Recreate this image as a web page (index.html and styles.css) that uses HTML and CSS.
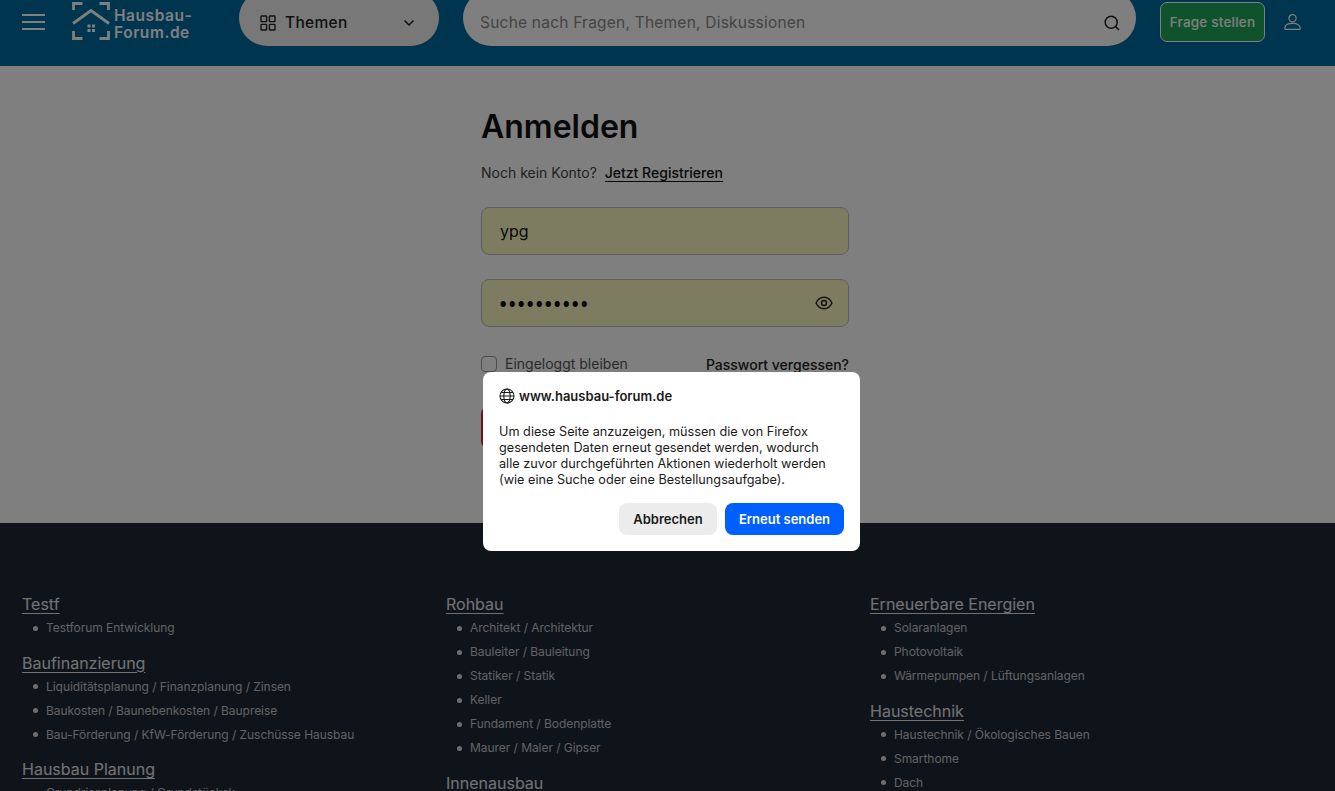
FILE: index.html
```html
<!DOCTYPE html>
<html lang="de">
<head>
<meta charset="utf-8">
<title>Anmelden</title>
<link rel="stylesheet" href="styles.css">
</head>
<body>
<header class="topbar">
  <button class="burger" aria-label="Menü"><span></span><span></span><span></span></button>
  <a class="logo">
    <svg class="logo-mark" width="38" height="38" viewBox="0 0 38 38" fill="none" stroke="currentColor" stroke-width="2.8">
      <path d="M1.500 8V1.500H10.500M27.500 1.500H36.500V8M1.500 29V36.500H10.500M27.500 36.500H36.500V29"/>
      <path d="M1 21.500L19 8.500L37 21.500"/>
      <path d="M15.500 22.500h3v3h-3zM20 22.500h3v3h-3zM15.500 27h3v3h-3zM20 27h3v3h-3z" fill="currentColor" stroke="none"/>
    </svg>
    <span class="logo-text">Hausbau -<br>Forum.de</span>
  </a>
  <button class="themes">
    <svg width="16" height="16" viewBox="0 0 16 16" fill="none" stroke="currentColor" stroke-width="1.4"><rect x="1" y="1" width="5.6" height="5.6" rx=".6"/><rect x="9.4" y="1" width="5.6" height="5.6" rx=".6"/><rect x="1" y="9.4" width="5.6" height="5.6" rx=".6"/><rect x="9.4" y="9.4" width="5.6" height="5.6" rx=".6"/></svg>
    <span class="themes-label">Themen</span>
    <svg class="chev" width="12" height="8" viewBox="0 0 12 8" fill="none" stroke="currentColor" stroke-width="1.5"><path d="M1.500 1.500L6 6L10.500 1.500"/></svg>
  </button>
  <div class="search">
    <span class="search-ph">Suche nach Fragen, Themen, Diskussionen</span>
    <svg width="18" height="18" viewBox="0 0 18 18" fill="none" stroke="currentColor" stroke-width="1.5"><circle cx="8.200" cy="8.200" r="6"/><path d="M12.600 12.600L16 16"/></svg>
  </div>
  <button class="ask">Frage stellen</button>
  <svg class="user" width="17" height="16" viewBox="0 0 17 16" fill="none" stroke="currentColor" stroke-width="1.200"><circle cx="8.500" cy="4.300" r="3.600"/><path d="M.8 14.400c0-3 3-5 7.700-5s7.700 2 7.700 5c0 .6-.3.900-.9.900H1.700c-.6 0-.9-.3-.9-.9z"/></svg>
</header>

<main class="content">
  <form class="login">
    <h1>Anmelden</h1>
    <p class="signup"><span>Noch kein Konto?</span> <a>Jetzt Registrieren</a></p>
    <div class="field">ypg</div>
    <div class="field field-pass">
      <span class="dots">●●●●●●●●●●</span>
      <svg width="18" height="14" viewBox="0 0 18 14" fill="none" stroke="currentColor" stroke-width="1.400"><path d="M1 7C3 3 5.800 1.200 9 1.200S15 3 17 7c-2 4-4.800 5.800-8 5.800S3 11 1 7z"/><circle cx="9" cy="7" r="2.500"/></svg>
    </div>
    <div class="options">
      <label class="remember"><span class="check"></span>Eingeloggt bleiben</label>
      <a class="forgot">Passwort vergessen?</a>
    </div>
    <button class="submit" type="button">Anmelden</button>
  </form>
</main>

<footer class="footer">
  <div class="col">
    <h3>Testf</h3>
    <ul><li>Testforum Entwicklung</li></ul>
    <h3>Baufinanzierung</h3>
    <ul><li>Liquiditätsplanung / Finanzplanung / Zinsen</li><li>Baukosten / Baunebenkosten / Baupreise</li><li>Bau-Förderung / KfW-Förderung / Zuschüsse Hausbau</li></ul>
    <h3>Hausbau Planung</h3>
    <ul><li>Grundrissplanung / Grundstücksk</li></ul>
  </div>
  <div class="col">
    <h3>Rohbau</h3>
    <ul><li>Architekt / Architektur</li><li>Bauleiter / Bauleitung</li><li>Statiker / Statik</li><li>Keller</li><li>Fundament / Bodenplatte</li><li>Maurer / Maler / Gipser</li></ul>
    <h3>Innenausbau</h3>
  </div>
  <div class="col">
    <h3>Erneuerbare Energien</h3>
    <ul><li>Solaranlagen</li><li>Photovoltaik</li><li>Wärmepumpen / Lüftungsanlagen</li></ul>
    <h3>Haustechnik</h3>
    <ul><li>Haustechnik / Ökologisches Bauen</li><li>Smarthome</li><li>Dach</li></ul>
  </div>
</footer>

<div class="scrim"></div>
<div class="dialog" role="dialog">
  <div class="dialog-host">
    <svg width="16" height="16" viewBox="0 0 16 16" fill="none" stroke="currentColor" stroke-width="1.100"><circle cx="8" cy="8" r="7"/><ellipse cx="8" cy="8" rx="3.200" ry="7"/><path d="M1 8h14M2 4.500h12M2 11.500h12"/></svg>
    <span>www.hausbau-forum.de</span>
  </div>
  <p class="dialog-text">Um diese Seite anzuzeigen, müssen die von Firefox gesendeten Daten erneut gesendet werden, wodurch alle zuvor durchgeführten Aktionen wiederholt werden (wie eine Suche oder eine Bestellungsaufgabe).</p>
  <div class="dialog-actions">
    <button class="btn btn-cancel">Abbrechen</button>
    <button class="btn btn-primary">Erneut senden</button>
  </div>
</div>
</body>
</html>
```
FILE: styles.css
```css
* { box-sizing: border-box; }
html, body { margin: 0; padding: 0; height: 791px; overflow: hidden; }
body { font-family: Inter, "Liberation Sans", sans-serif; background: #fff; color: #111; }
button { font-family: inherit; border: 0; padding: 0; }
p, h1, h3, ul { margin: 0; padding: 0; }

.topbar { height: 66px; background: #006a9f; display: flex; align-items: flex-end; padding: 0 34px 20px 22px; overflow: hidden; flex: none; }
.burger { width: 23px; background: none; display: flex; flex-direction: column; gap: 5px; margin-bottom: 16px; flex: none; }
.burger span { display: block; height: 2px; background: #fff; }
.logo { display: flex; align-items: center; gap: 4px; width: 118px; margin-left: 27px; color: #fff; margin-bottom: 5px; flex: none; }
.logo-mark { flex: none; }
.logo-text { font-weight: 600; font-size: 15.500px; line-height: 17px; letter-spacing: .55px; word-spacing: -4.500px; padding-top: 6px; white-space: nowrap; }
.themes { width: 200px; height: 56px; margin-left: 49px; border-radius: 28px; background: #f1f1f1; display: flex; align-items: center; padding: 9px 24px 0 21px; color: #222; flex: none; }
.themes-label { font-size: 15.500px; font-weight: 500; margin-left: 9px; flex: 1; text-align: left; letter-spacing: .3px; }
.search { flex: 1; height: 56px; margin-left: 24px; border-radius: 28px; background: #fff; display: flex; align-items: center; padding: 9px 15px 0 17px; color: #222; }
.search-ph { flex: 1; font-size: 15.500px; color: #888; letter-spacing: .22px; }
.ask { width: 105px; height: 40px; margin-left: 24px; margin-bottom: 4px; border-radius: 7px; background: #1fa65a; border: 1px solid #fff; color: #fff; font-size: 13.500px; font-weight: 500; letter-spacing: .2px; flex: none; }
.user { margin-left: 19px; margin-bottom: 16px; color: #fff; flex: none; }

.content { height: 457px; display: flex; justify-content: center; overflow: hidden; }
.login { width: 368px; margin-left: -5px; padding-top: 42px; }
h1 { font-size: 32px; font-weight: 600; line-height: 38px; }
.signup { font-size: 14px; line-height: 20px; margin-top: 17px; color: #444; }
.signup a { color: #111; font-weight: 500; border-bottom: 1.500px solid #111; margin-left: 4px; }
.field { height: 48px; margin-top: 24px; border-radius: 8px; background: #fbf9c0; border: 1px solid #bbb; padding: 0 18px; display: flex; align-items: center; font-size: 16px; color: #111; }
.field-pass { justify-content: space-between; padding-right: 15px; color: #222; }
.dots { font-size: 7px; letter-spacing: 2.600px; color: #000; padding-top: 2px; }
.options { display: flex; justify-content: space-between; align-items: center; margin-top: 28px; font-size: 14px; }
.remember { display: flex; align-items: center; gap: 8px; color: #555; }
.check { width: 16px; height: 16px; border: 1px solid #999; border-radius: 4px; background: #fff; }
.forgot { color: #222; font-weight: 500; position: relative; top: 1px; }
.submit { display: block; width: 100%; height: 43px; margin-top: 34px; border-radius: 8px; background: #d1263c; color: #fff; font-size: 14px; font-weight: 600; }

.footer { height: 268px; background: #1f2937; padding: 71px 22px 0; display: grid; grid-template-columns: repeat(3, 424px); align-items: start; overflow: hidden; color: #e5e5e5; }
.col h3 { font-size: 16px; font-weight: 400; line-height: 20px; text-decoration: underline; text-underline-offset: 3px; text-decoration-thickness: 1px; }
.col ul { list-style: none; margin: 0 0 12.500px; padding: 2px 0 0 24px; }
.col li { font-size: 12px; line-height: 24px; letter-spacing: -.05px; color: #c4c4c4; position: relative; }
.col li::before { content: ""; position: absolute; left: -13.500px; top: 9.500px; width: 5px; height: 5px; border-radius: 50%; background: #ddd; }

.scrim { position: fixed; inset: 0; background: rgba(0,0,0,.5); }
.dialog { position: fixed; left: 483px; top: 372px; width: 377px; height: 179px; background: #fff; border-radius: 8px; padding: 16px; color: #1a1a1a; display: flex; flex-direction: column; }
.dialog-host { display: flex; align-items: center; gap: 4px; font-size: 13px; font-weight: 600; line-height: 16px; }
.dialog-text { font-size: 12.700px; line-height: 16px; margin-top: 20px; max-width: 335px; }
.dialog-actions { display: flex; justify-content: flex-end; gap: 8px; margin-top: 15px; }
.btn { height: 32px; border-radius: 8px; font-size: 13px; font-weight: 600; }
.btn-cancel { width: 98px; background: #ececec; color: #1a1a1a; }
.btn-primary { width: 119px; background: #0060ff; color: #fff; }
```
